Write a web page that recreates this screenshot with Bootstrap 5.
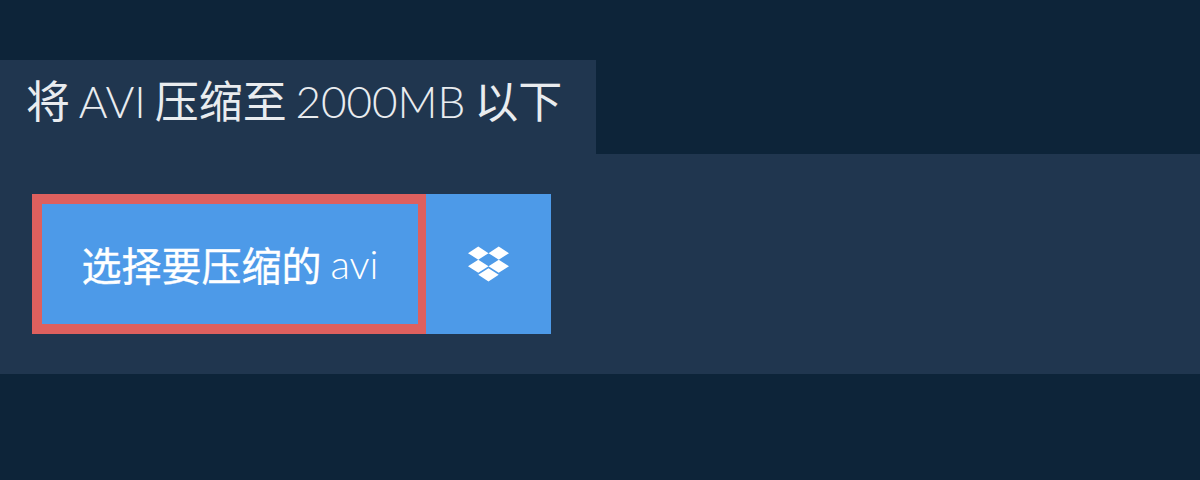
<!DOCTYPE html>
<html lang="zh">
<head>
<meta charset="utf-8">
<title>将 AVI 压缩至 2000MB 以下</title>
<link href="https://cdn.jsdelivr.net/npm/bootstrap@5.3.0/dist/css/bootstrap.min.css" rel="stylesheet">
<style>
html, body { height: 100%; }
body { background: #0d2439; padding-top: 60px; font-family: "Noto Sans CJK SC", "Noto Sans", sans-serif; overflow: hidden; }
.tab-head { background: #20364f; width: 596px; height: 94px; margin: 0; padding: 0 0 0 26px; font-size: 44px; line-height: 78px; font-weight: 400; word-spacing: -1px; color: #e9ecef; white-space: nowrap; }
.lat { font-family: Lato, sans-serif; font-weight: 300; -webkit-text-stroke: 0; }
.drop-panel { background: #20364f; height: 220px; padding: 40px 32px; }
.pick-btn, .box-btn { height: 140px; border-radius: 0; background: #4d9ae8; color: #fff; }
.pick-btn { width: 394px; border-style: solid; border-color: #de605e; border-width: 10px 8px 10px 10px; font-size: 40px; font-weight: 400; -webkit-text-stroke: 0.4px #fff; line-height: 1; padding: 0; }
.pick-btn:hover, .box-btn:hover { background: #4d9ae8; color: #fff; border-color: #de605e; }
.box-btn { width: 125px; border: 0; padding: 0; }
.box-btn svg { width: 41px; height: 40px; fill: #fff; }
</style>
</head>
<body>
<h1 class="tab-head">将 <span class="lat">AVI</span> 压缩至 <span class="lat">2000MB</span> 以下</h1>
<div class="drop-panel">
  <div class="d-flex">
    <button type="button" class="btn pick-btn d-flex align-items-center justify-content-center">选择要压缩的&nbsp;<span class="lat">avi</span></button>
    <button type="button" class="btn box-btn d-flex align-items-center justify-content-center" aria-label="Dropbox">
      <svg viewBox="0 0 528 512" aria-hidden="true"><path d="M264.4 116.3l-132 84.3 132 84.3-132 84.3L0 284.1l132.3-84.3L0 116.3 132.3 32l132.1 84.3zM131.6 395.7l132-84.3 132 84.3-132 84.3-132-84.3zm132.8-111.6l132-84.3-132-83.6L395.7 32 528 116.3l-132.3 84.3L528 284.8l-132.3 84.3-131.3-85z"/></svg>
    </button>
  </div>
</div>
<script src="https://cdn.jsdelivr.net/npm/bootstrap@5.3.0/dist/js/bootstrap.bundle.min.js"></script>
</body>
</html>
